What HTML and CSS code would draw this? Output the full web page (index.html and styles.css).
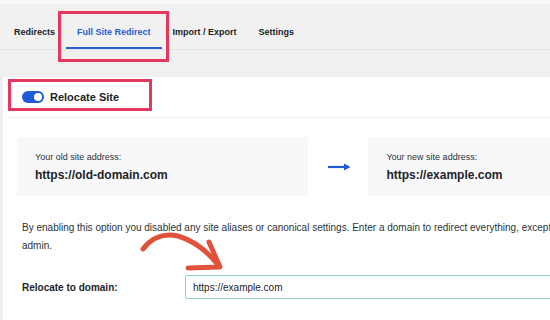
FILE: index.html
```html
<!DOCTYPE html>
<html lang="en">
<head>
<meta charset="utf-8">
<title>Full Site Redirect</title>
<link rel="stylesheet" href="styles.css">
</head>
<body>
<div class="page">
  <div class="topstrip"></div>
  <nav class="tabs">
    <a class="tab">Redirects</a>
    <a class="tab active">Full Site Redirect<span class="mark mark-tab"></span></a>
    <a class="tab">Import / Export</a>
    <a class="tab">Settings</a>
  </nav>
  <main class="panel">
    <div class="toggle-row">
      <span class="switch"><span class="knob"></span></span>
      <span class="toggle-label">Relocate Site</span>
      <span class="mark mark-toggle"></span>
    </div>
    <div class="sites">
      <div class="site-card old">
        <div class="site-label">Your old site address:</div>
        <div class="site-url">https://old-domain.com</div>
      </div>
      <div class="site-arrow">
        <svg width="23" height="10" viewBox="0 0 23 10"><path d="M0 5 H18" stroke="#1e5bd6" stroke-width="2.2" fill="none"/><path d="M16 1.5 L22.5 5 L16 8.5 Z" fill="#1e5bd6"/></svg>
      </div>
      <div class="site-card new">
        <div class="site-label">Your new site address:</div>
        <div class="site-url">https://example.com</div>
      </div>
    </div>
    <p class="note">By enabling this option you disabled any site aliases or canonical settings. Enter a domain to redirect everything, except<br>admin.</p>
    <div class="field">
      <label class="field-label" for="domain">Relocate to domain:</label>
      <input class="field-input" id="domain" type="text" value="https://example.com">
    </div>
    <svg class="scribble" width="100" height="55" viewBox="0 0 100 55">
      <path d="M13 25 C22 13, 35 9, 48 12 C65 17, 79 29, 89 42" stroke="#e0523c" stroke-width="5" fill="none" stroke-linecap="round"/>
      <path d="M58 44 L90 43 L79 18" stroke="#e0523c" stroke-width="5" fill="none" stroke-linecap="round" stroke-linejoin="round"/>
    </svg>
  </main>
</div>
</body>
</html>
```
FILE: styles.css
```css
html, body {
  margin: 0;
  padding: 0;
}
body {
  background: #f0f0f1;
  font-family: "Liberation Sans", Arial, sans-serif;
  color: #1d2327;
  overflow: hidden;
  width: 550px;
  height: 320px;
}
.page {
  width: 550px;
  height: 320px;
  overflow: hidden;
}
.topstrip {
  height: 4px;
  background: #f7f7f8;
}
.tabs {
  display: flex;
  height: 45px;
  padding-left: 3px;
  background: #f1f1f2;
  border-bottom: 1px solid #e2e2e4;
}
.tab {
  position: relative;
  display: block;
  box-sizing: border-box;
  height: 45px;
  padding: 22px 11px 0;
  font-size: 9px;
  line-height: 12px;
  font-weight: bold;
  color: #1d2327;
}
.tab.active {
  color: #2560cf;
  box-shadow: inset 0 -2px 0 #2560cf;
}
.mark {
  position: absolute;
  box-sizing: border-box;
  border: 3px solid #e6375f;
}
.mark-tab {
  left: -8px;
  right: -7px;
  top: 7px;
  bottom: -13px;
}
.panel {
  position: relative;
  width: 660px;
  margin: 27px 0 0 3px;
  background: #ffffff;
  height: 243px;
}
.toggle-row {
  position: relative;
  display: flex;
  align-items: center;
  gap: 6px;
  height: 40px;
  margin-left: 5px;
  padding-left: 14px;
  border-bottom: 1px solid #ebebed;
}
.mark-toggle {
  left: 0;
  top: 2px;
  width: 144px;
  height: 32px;
}
.switch {
  position: relative;
  display: block;
  width: 22px;
  height: 12px;
  border-radius: 6px;
  background: #1e5bd7;
}
.knob {
  position: absolute;
  right: 2px;
  top: 2px;
  width: 8px;
  height: 8px;
  border-radius: 50%;
  background: #ffffff;
}
.toggle-label {
  font-size: 11px;
  font-weight: bold;
  color: #1d2327;
}
.sites {
  display: flex;
  margin: 19px 0 0 14px;
  height: 59px;
}
.site-card {
  box-sizing: border-box;
  padding: 15px 18px 0;
  background: #f8f8fa;
}
.site-card.old {
  width: 296px;
}
.site-card.new {
  width: 300px;
}
.site-arrow {
  width: 62px;
  display: flex;
  align-items: center;
  justify-content: center;
  padding-left: 3px;
  box-sizing: border-box;
}
.site-label {
  font-size: 9px;
  line-height: 11px;
  color: #2c3338;
}
.site-url {
  margin-top: 5px;
  font-size: 12px;
  line-height: 14px;
  font-weight: bold;
  color: #1d2327;
}
.note {
  margin: 23px 0 0 19px;
  font-size: 10px;
  line-height: 18px;
  color: #2c3338;
  white-space: nowrap;
}
.field {
  display: flex;
  align-items: center;
  margin: 20px 0 0 19px;
}
.field-label {
  width: 163px;
  font-size: 10px;
  font-weight: bold;
  color: #1d2327;
}
.field-input {
  flex: 1;
  box-sizing: border-box;
  height: 24px;
  margin: 0;
  padding: 0 7px;
  border: 1.5px solid #93d3bd;
  border-radius: 2px;
  font-family: "Liberation Sans", Arial, sans-serif;
  font-size: 10px;
  color: #1d2327;
  background: #ffffff;
  outline: none;
}
.scribble {
  position: absolute;
  left: 127px;
  top: 147px;
}
```
